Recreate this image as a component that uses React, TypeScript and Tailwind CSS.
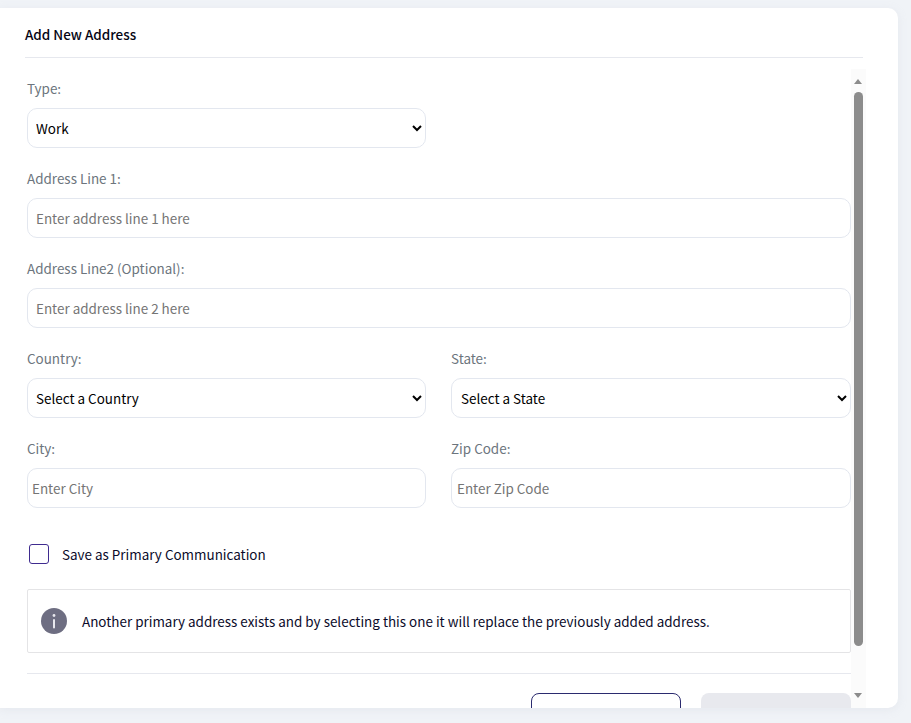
import React from "react";

const font = { fontFamily: '"Noto Sans CJK SC", "Noto Sans", sans-serif' };

function Label({ children }: { children: React.ReactNode }) {
  return <label className="block h-5 mb-[9px] text-[13.45px] leading-[18px] text-[#6c757d]">{children}</label>;
}

function Select({ value, options, pad = "pl-1" }: { value: string; options: string[]; pad?: string }) {
  return (
    <select
      defaultValue={value}
      className={`block w-full h-10 rounded-[10px] border border-[#e3e7ef] bg-white ${pad} pr-0 text-[13.45px] text-[#000000] outline-none`}
    >
      {options.map((o) => (
        <option key={o}>{o}</option>
      ))}
    </select>
  );
}

function Input({ placeholder, pad = "px-2" }: { placeholder: string; pad?: string }) {
  return (
    <input
      placeholder={placeholder}
      className={`block w-full h-10 rounded-[10px] border border-[#e3e7ef] bg-white ${pad} text-[13.45px] outline-none placeholder:text-[#757575]`}
    />
  );
}

export default function App() {
  return (
    <div className="h-[723px] w-[911px] overflow-hidden bg-[#f0f3f7] pt-2" style={font}>
      <div className="relative h-[700px] w-[898px] overflow-hidden rounded-r-[10px] bg-white shadow-[0_2px_8px_rgba(200,205,215,0.25)]">
        <div className="ml-[25px] mr-[35px] h-[50px] border-b border-[#e6e8ee] pt-4 text-[13.45px] font-medium leading-5 text-[#050514]">
          Add New Address
        </div>

        <div className="ml-[27px] w-[824px] pt-[21px]">
          <div className="mb-[21px] w-[399px]">
            <Label>Type:</Label>
            <Select value="Work" options={["Work", "Home"]} />
          </div>
          <div className="mb-[21px]">
            <Label>Address Line 1:</Label>
            <Input placeholder="Enter address line 1 here" />
          </div>
          <div className="mb-[21px]">
            <Label>Address Line2 (Optional):</Label>
            <Input placeholder="Enter address line 2 here" />
          </div>
          <div className="mb-[21px] grid grid-cols-[399px_400px] gap-x-[25px]">
            <div>
              <Label>Country:</Label>
              <Select value="Select a Country" options={["Select a Country"]} />
            </div>
            <div>
              <Label>State:</Label>
              <Select value="Select a State" options={["Select a State"]} pad="pl-[5px]" />
            </div>
          </div>
          <div className="grid grid-cols-[399px_400px] gap-x-[25px]">
            <div>
              <Label>City:</Label>
              <Input placeholder="Enter City" pad="px-1" />
            </div>
            <div>
              <Label>Zip Code:</Label>
              <Input placeholder="Enter Zip Code" pad="px-[5px]" />
            </div>
          </div>

          <div className="mt-9 flex h-5 items-center pl-0.5">
            <span className="h-5 w-5 rounded-[3px] border border-[#3f2b8f] bg-white" />
            <span className="ml-[13px] text-[13.45px] leading-5 text-[#0b0b2a]">Save as Primary Communication</span>
          </div>

          <div className="mt-[25px] flex h-16 items-center rounded-[2px] border border-[#e4e4e6] pl-[13px]">
            <svg width="26" height="26" viewBox="0 0 26 26" aria-hidden="true">
              <circle cx="13" cy="13" r="13" fill="#6e6e82" />
              <circle cx="13" cy="7.5" r="1.4" fill="#e8e8ee" />
              <rect x="12" y="11" width="2" height="9.5" rx="1" fill="#e8e8ee" />
            </svg>
            <span className="ml-[15px] text-[13.45px] leading-5 text-[#0b0b2a]">
              Another primary address exists and by selecting this one it will replace the previously added address.
            </span>
          </div>

          <div className="mt-5 border-t border-[#e6e8ee] pt-[19px]">
            <div className="flex justify-end gap-5">
              <button className="h-10 w-[150px] rounded-lg border border-[#2b2b6f] bg-white" />
              <button className="h-10 w-[150px] rounded-lg bg-[#e8e9ee]" />
            </div>
          </div>
        </div>

        {/* scrollbar over the content */}
        <div className="absolute bottom-0 left-[851px] top-[61px] w-[15px] bg-[#fbfbfb]">
          <div className="absolute left-[3px] top-[10px] h-0 w-0 border-x-[4.5px] border-b-[5px] border-x-transparent border-b-[#8c8c8c]" />
          <div className="absolute left-[3px] top-[23px] h-[554px] w-[9px] rounded-full bg-[#8c8c8c]" />
          <div className="absolute left-[3px] top-[624px] h-0 w-0 border-x-[4.5px] border-t-[5px] border-x-transparent border-t-[#8c8c8c]" />
        </div>
      </div>
    </div>
  );
}
